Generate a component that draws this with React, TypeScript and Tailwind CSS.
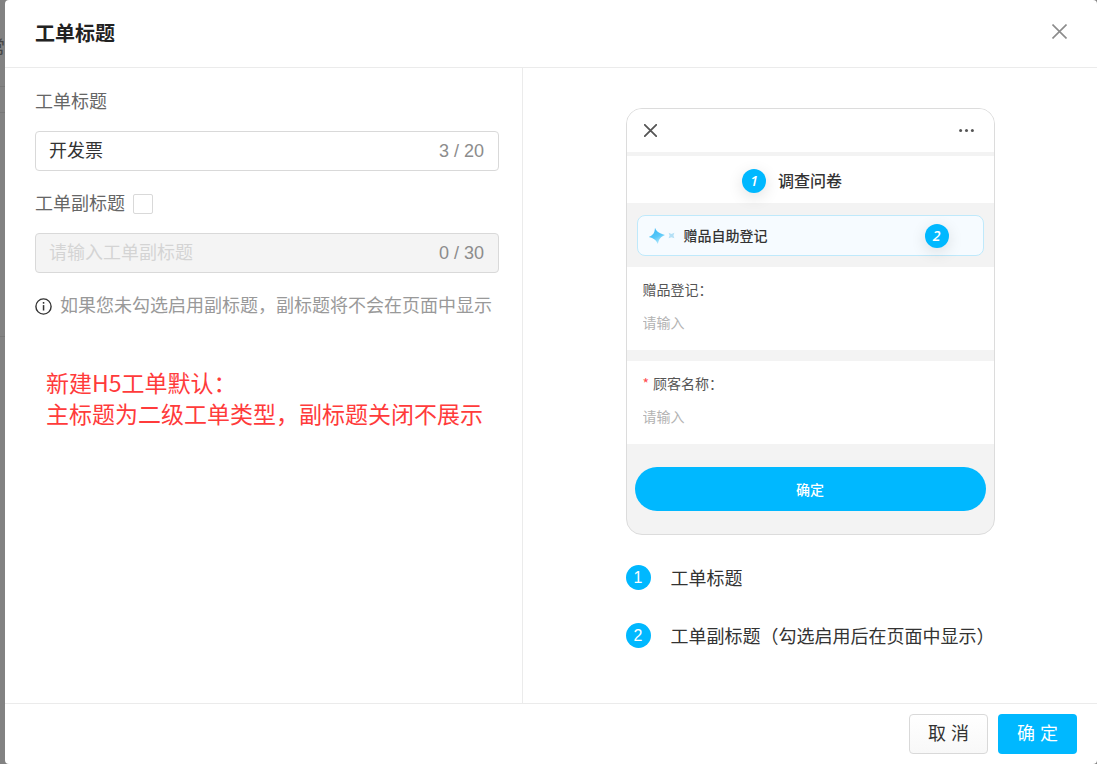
import React, { useState } from "react";

const CloseIcon = () => (
  <svg width="15" height="15" viewBox="0 0 15 15" fill="none">
    <path d="M0.5 0.5L14.5 14.5M14.5 0.5L0.5 14.5" stroke="currentColor" strokeWidth="1.6" />
  </svg>
);

const PhoneCloseIcon = () => (
  <svg width="13" height="13" viewBox="0 0 13 13" fill="none">
    <path d="M0.8 0.8L12.2 12.2M12.2 0.8L0.8 12.2" stroke="currentColor" strokeWidth="1.8" strokeLinecap="round" />
  </svg>
);

const DotsIcon = () => (
  <svg width="15" height="3" viewBox="0 0 15 3" fill="currentColor">
    <circle cx="1.6" cy="1.5" r="1.5" />
    <circle cx="7.5" cy="1.5" r="1.5" />
    <circle cx="13.4" cy="1.5" r="1.5" />
  </svg>
);

const InfoIcon = () => (
  <svg width="17" height="17" viewBox="0 0 17 17" fill="none" className="shrink-0">
    <circle cx="8.5" cy="8.5" r="7.6" stroke="currentColor" strokeWidth="1.4" />
    <rect x="7.8" y="4" width="1.5" height="1.7" fill="currentColor" />
    <rect x="7.8" y="7.1" width="1.5" height="5.4" fill="currentColor" />
  </svg>
);

const SparkIcon = () => (
  <svg width="28" height="18" viewBox="0 0 28 18" fill="none">
    <defs>
      <linearGradient id="spark" x1="4" y1="1" x2="13" y2="17" gradientUnits="userSpaceOnUse">
        <stop stopColor="#35b6f5" />
        <stop offset="0.55" stopColor="#58c8f8" />
        <stop offset="1" stopColor="#c9effd" />
      </linearGradient>
    </defs>
    <path
      d="M7 0.8C8.6 4.8 10.4 6 17 8C12.6 9.8 11.2 11.6 9.8 17C8 12.8 5.8 11.4 0.8 10C5.2 8.2 6.6 6 7 0.8Z"
      fill="url(#spark)"
    />
    <path d="M20.6 5.8L23.4 7L26.4 5.8L25.4 8.6L26.4 11.2L23.4 10.2L20.6 11.2L21.6 8.6Z" fill="#b4e0f6" />
  </svg>
);

const Badge: React.FC<{ value: number }> = ({ value }) => (
  <span className="flex size-6 items-center justify-center rounded-full bg-[#00b8ff] font-['Open_Sans',sans-serif] text-[14px] font-semibold text-white italic shadow-[0_4px_16px_rgba(0,0,0,0.12)]">
    {value}
  </span>
);

interface PhoneFieldProps {
  id: string;
  label: string;
  required?: boolean;
}

const PhoneField: React.FC<PhoneFieldProps> = ({ id, label, required }) => (
  <div className="flex h-[83px] flex-col bg-white px-4 pt-3">
    <label htmlFor={id} className="text-[14px] leading-5 text-[#555]">
      {required && <span className="mr-1 text-[#ff4d4f]">*</span>}
      {label}
    </label>
    <input
      id={id}
      placeholder="请输入"
      className="mt-[13px] h-5 w-full bg-transparent text-[14px] text-[#333] outline-none placeholder:text-[#b3b3b3]"
    />
  </div>
);

const PhonePreview = () => (
  <div className="w-full max-w-[369px] overflow-hidden rounded-2xl border border-[#dcdcdc] bg-[#f3f3f3] font-['Noto_Sans_CJK_SC',sans-serif]">
    <div className="flex h-[43px] items-center justify-between bg-white pr-5 pl-[17px] text-[#555]">
      <button type="button" aria-label="关闭预览">
        <PhoneCloseIcon />
      </button>
      <button type="button" aria-label="更多">
        <DotsIcon />
      </button>
    </div>
    <div className="mt-1 flex h-[47px] items-center justify-center bg-white">
      <div className="relative">
        <div className="absolute top-0 right-full mr-3">
          <Badge value={1} />
        </div>
        <h3 className="text-[16px] leading-[22px] font-medium text-[#333]">调查问卷</h3>
      </div>
    </div>
    <div className="px-[10px] pt-3 pb-[11px]">
      <div className="flex h-[41px] items-center rounded-lg border border-[#bfe9fb] bg-[#f6fbff] pr-[34px] pl-[10px]">
        <SparkIcon />
        <span className="ml-2 flex-1 text-[14px] font-medium text-[#333]">赠品自助登记</span>
        <Badge value={2} />
      </div>
    </div>
    <div className="flex flex-col gap-[11px]">
      <PhoneField id="gift" label="赠品登记：" />
      <PhoneField id="customer" label="顾客名称：" required />
    </div>
    <div className="px-2 py-[23px]">
      <button type="button" className="h-11 w-full rounded-full bg-[#00b8ff] text-[14px] font-medium text-white">
        确定
      </button>
    </div>
  </div>
);

const legend = ["工单标题", "工单副标题（勾选启用后在页面中显示）"];

export default function App() {
  const [title, setTitle] = useState("开发票");
  const [subtitle, setSubtitle] = useState("");
  const [enabled, setEnabled] = useState(false);

  return (
    <div
      lang="zh-CN"
      className="flex min-h-screen bg-[#828282] font-['Liberation_Sans','Noto_Sans_CJK_SC',sans-serif] text-[18px] text-[#333]"
    >
      {/* strip of the page behind the dialog */}
      <div aria-hidden="true" className="w-[5px] shrink-0 overflow-hidden">
        <div className="flex h-[87px] justify-end border-b border-[#777] pt-[34px] leading-7 text-[#444]">常</div>
        <div className="h-[26px] border-b border-[#777]" />
        <div className="h-56 border-b border-[#777]" />
      </div>

      <div role="dialog" aria-labelledby="dialog-title" className="flex min-w-0 flex-1 flex-col rounded bg-white">
        <header className="flex h-[68px] items-start justify-between border-b border-[#ebebeb] px-[30px] pt-6">
          <h2 id="dialog-title" className="text-[20px] leading-5 font-bold text-[#222]">
            工单标题
          </h2>
          <button type="button" aria-label="关闭" className="text-[#8c8c8c]">
            <CloseIcon />
          </button>
        </header>

        <main className="grid flex-1 grid-cols-[518fr_574fr]">
          <section className="flex flex-col gap-[18px] border-r border-[#ebebeb] pt-[19px] pr-[23px] pl-[30px]">
            <div>
              <label htmlFor="title" className="block leading-[30px] text-[#666]">
                工单标题
              </label>
              <div className="mt-[14px] flex h-10 items-center rounded border border-[#d9d9d9] pr-[14px] pl-[13px]">
                <input
                  id="title"
                  value={title}
                  maxLength={20}
                  onChange={(e) => setTitle(e.target.value)}
                  className="min-w-0 flex-1 bg-transparent outline-none"
                />
                <span className="text-[#8c8c8c]">{title.length} / 20</span>
              </div>
            </div>

            <div>
              <div className="flex items-center gap-2">
                <label htmlFor="subtitle" className="leading-[30px] text-[#666]">
                  工单副标题
                </label>
                <input
                  type="checkbox"
                  aria-label="启用副标题"
                  checked={enabled}
                  onChange={(e) => setEnabled(e.target.checked)}
                  className="size-5 appearance-none rounded-xs border border-[#d9d9d9] bg-white checked:bg-[#00b8ff]"
                />
              </div>
              <div className="mt-[14px] flex h-10 items-center rounded border border-[#d9d9d9] bg-[#f4f4f4] pr-[14px] pl-[13px]">
                <input
                  id="subtitle"
                  value={subtitle}
                  maxLength={30}
                  disabled={!enabled}
                  placeholder="请输入工单副标题"
                  onChange={(e) => setSubtitle(e.target.value)}
                  className="min-w-0 flex-1 bg-transparent outline-none placeholder:text-[#d4d4d4]"
                />
                <span className="text-[#8c8c8c]">{subtitle.length} / 30</span>
              </div>
            </div>

            <div className="flex items-center gap-2">
              <InfoIcon />
              <p className="leading-[30px] whitespace-nowrap text-[#999]">
                如果您未勾选启用副标题，副标题将不会在页面中显示
              </p>
            </div>

            <p className="mt-7 ml-[11px] font-['Noto_Sans_CJK_SC',sans-serif] text-[23px] leading-[31px] whitespace-nowrap text-[#ff3b3b]">
              新建H5工单默认：
              <br />
              主标题为二级工单类型，副标题关闭不展示
            </p>
          </section>

          <section className="flex flex-col items-center px-6 pt-10">
            <PhonePreview />
            <ul className="mt-[30px] flex w-full max-w-[369px] flex-col gap-[33px]">
              {legend.map((text, index) => (
                <li key={text} className="flex h-[25px] items-center gap-5">
                  <span className="flex size-[25px] shrink-0 items-center justify-center rounded-full bg-[#00b8ff] text-[16px] text-white">
                    {index + 1}
                  </span>
                  <span className="pt-1 whitespace-nowrap">{text}</span>
                </li>
              ))}
            </ul>
          </section>
        </main>

        <footer className="flex justify-end gap-[10px] border-t border-[#ebebeb] px-5 py-[10px]">
          <button
            type="button"
            className="h-10 w-[79px] rounded border border-[#d9d9d9] bg-linear-to-b from-white to-[#f8f8f8]"
          >
            取 消
          </button>
          <button type="button" className="h-10 w-[79px] rounded bg-[#00b8ff] text-white">
            确 定
          </button>
        </footer>
      </div>
    </div>
  );
}
